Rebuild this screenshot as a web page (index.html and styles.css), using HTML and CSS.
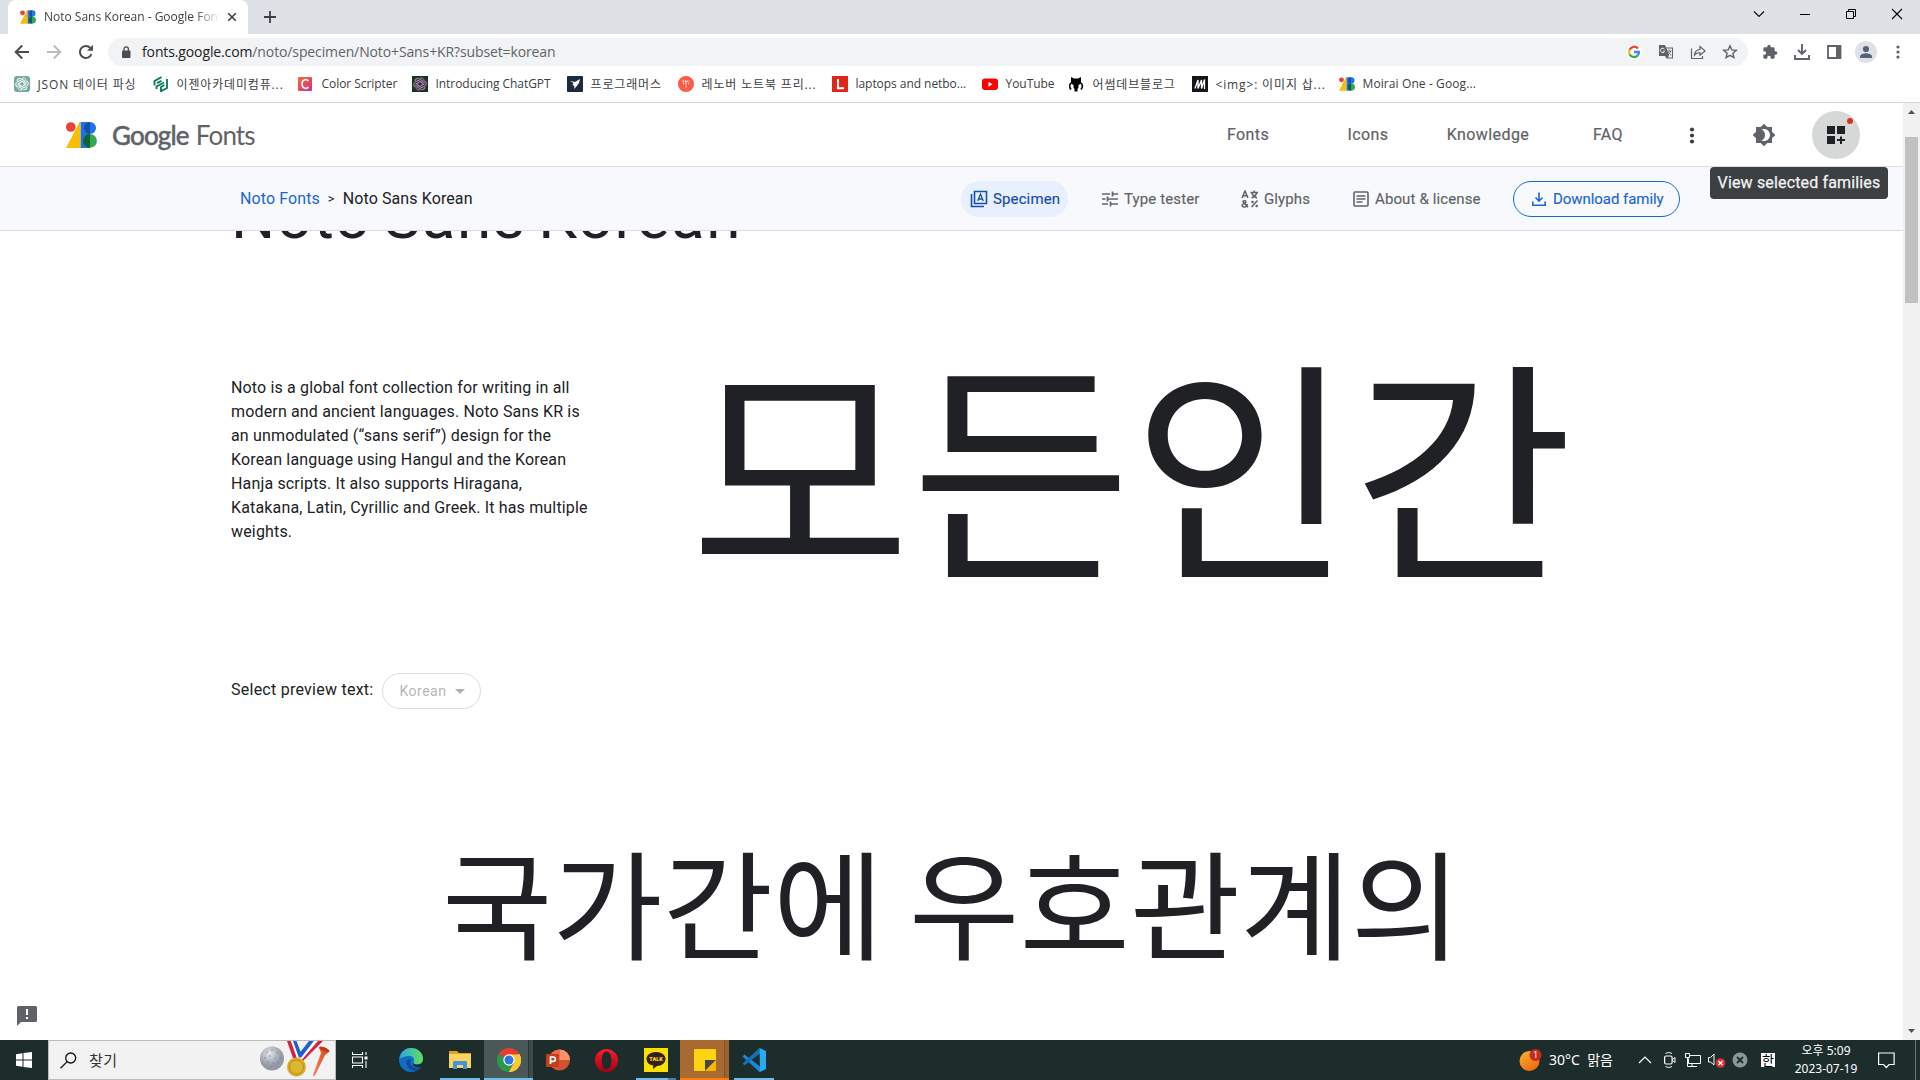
FILE: index.html
```html
<!DOCTYPE html>
<html lang="ko">
<head>
<meta charset="utf-8">
<title>Noto Sans Korean - Google Fonts</title>
<link rel="stylesheet" href="styles.css">
</head>
<body>
<svg class="defs" width="0" height="0">
  <symbol id="gf" viewBox="0 0 31 26">
    <path d="M14.700 0v26H0L13.500 0z" fill="#fbbc04"/>
    <path d="M14.700 0H24v26h-9.300z" fill="#1a73e8"/>
    <circle cx="4.800" cy="5" r="4.800" fill="#ea4335"/>
    <path d="M24 0a6 6 0 0 1 0 12z" fill="#1a73e8"/>
    <path d="M24 0a6 6 0 0 0 0 12z" fill="#174ea6"/>
    <path d="M24 12a6.900 6.900 0 0 1 0 13.800z" fill="#34a853"/>
    <path d="M24 12a6.900 6.900 0 0 0 0 13.800z" fill="#0d652d"/>
  </symbol>
  <symbol id="knot" viewBox="0 0 16 16">
    <g fill="none" stroke="currentColor" stroke-width="1">
      <path id="petal" d="M8 2.200c2-.9 4 .4 4 2.500v3.500L8 10.500"/>
      <use href="#petal" transform="rotate(60 8 8)"/>
      <use href="#petal" transform="rotate(120 8 8)"/>
      <use href="#petal" transform="rotate(180 8 8)"/>
      <use href="#petal" transform="rotate(240 8 8)"/>
      <use href="#petal" transform="rotate(300 8 8)"/>
    </g>
  </symbol>
</svg>

<div class="tabstrip">
  <div class="tab">
    <svg width="16" height="16"><use href="#gf"/></svg>
    <span class="tab-title">Noto Sans Korean - Google Fonts</span>
    <svg class="tab-close" width="10" height="10" viewBox="0 0 10 10"><path d="M1.200 1.200l7.600 7.600M8.800 1.200L1.200 8.800" stroke="#3c4043" stroke-width="1.600"/></svg>
  </div>
  <svg class="newtab" width="12" height="12" viewBox="0 0 12 12"><path d="M6 0v12M0 6h12" stroke="#3c4043" stroke-width="1.800"/></svg>
  <div class="winctl">
    <svg width="12" height="12" viewBox="0 0 12 12"><path d="M1 3.500l5 5 5-5" fill="none" stroke="#111" stroke-width="1.200"/></svg>
    <svg width="12" height="12" viewBox="0 0 12 12"><path d="M1 6.500h10" stroke="#000"/></svg>
    <svg width="12" height="12" viewBox="0 0 12 12"><path d="M1.500 3.500h7v7h-7zM3.500 3.500v-2h7v7h-2" fill="none" stroke="#000"/></svg>
    <svg width="12" height="12" viewBox="0 0 12 12"><path d="M1 1l10 10M11 1L1 11" stroke="#000" stroke-width="1.100"/></svg>
  </div>
</div>

<div class="toolbar">
  <svg width="16" height="16" viewBox="0 0 16 16"><path d="M15 8H2M8.200 1.500L1.700 8l6.500 6.500" fill="none" stroke="#4a4d51" stroke-width="2"/></svg>
  <svg width="16" height="16" viewBox="0 0 16 16"><path d="M1 8h13M7.800 1.500L14.300 8l-6.500 6.500" fill="none" stroke="#babcbe" stroke-width="2"/></svg>
  <svg width="16" height="16" viewBox="0 0 16 16"><path d="M13.500 10.200A6 6 0 1 1 12.400 4" fill="none" stroke="#4a4d51" stroke-width="2"/><path d="M15 .8v6H9z" fill="#4a4d51"/></svg>
  <div class="omnibox">
    <svg width="10" height="12" viewBox="0 0 10 12"><rect x="1" y="4.500" width="8.500" height="7.500" rx="1" fill="#4a4d51"/><path d="M3 5V3a2.200 2.200 0 0 1 4.400 0v2" fill="none" stroke="#4a4d51" stroke-width="1.300"/></svg>
    <span class="url"><b>fonts.google.com</b>/noto/specimen/Noto+Sans+KR?subset=korean</span>
    <div class="omni-icons">
      <svg width="16" height="16" viewBox="0 0 16 16"><circle cx="8" cy="8" r="8" fill="#fff"/><g fill="none" stroke-width="2.300"><path d="M12 4.500A5 5 0 0 0 3.600 5.700" stroke="#ea4335"/><path d="M3.600 5.700a5 5 0 0 0 0 4.600" stroke="#fbbc04"/><path d="M3.600 10.300a5 5 0 0 0 7.900 1.400" stroke="#34a853"/><path d="M11.500 11.700A5 5 0 0 0 13 8H8" stroke="#4285f4"/></g></svg>
      <svg width="16" height="16" viewBox="0 0 16 16"><path d="M1 1h6l1 2.500h7v11H8.500L7 12H1z" fill="#5f6368"/><path d="M8.500 4.500h5.500v9H10l1-2z" fill="#f1f3f4"/><path d="M9 7h4.500M11.200 5.500V7M12.700 7c-.5 2-1.500 3-3 4M10 8c.8 1.500 1.800 2.500 3.500 3.200" stroke="#5f6368" fill="none" stroke-width=".9"/><path d="M6.500 5.200a2.200 2.200 0 1 0 .2 2H5" stroke="#f1f3f4" fill="none"/></svg>
      <svg width="16" height="16" viewBox="0 0 16 16"><path d="M1.500 4.500v10h11V12" fill="none" stroke="#5f6368" stroke-width="1.200"/><path d="M4.500 11c.3-3.500 2.500-5.300 5.500-5.500V2.600L15.200 7 10 11.300V8.600c-2.300 0-4.200.8-5.500 2.400z" fill="none" stroke="#5f6368" stroke-width="1.200"/></svg>
      <svg width="16" height="16" viewBox="0 0 16 16"><path d="M8 1.800l1.800 4.100 4.500.4-3.400 2.900 1 4.400L8 11.300l-3.900 2.300 1-4.400-3.400-2.900 4.500-.4z" fill="none" stroke="#5f6368" stroke-width="1.400"/></svg>
    </div>
  </div>
  <div class="actions">
    <svg width="16" height="16" viewBox="0 0 24 24"><path d="M20.500 11H19V7a2 2 0 0 0-2-2h-4V3.500a2.500 2.500 0 0 0-5 0V5H4a2 2 0 0 0-2 2v3.800h1.500a2.700 2.700 0 0 1 0 5.400H2V20a2 2 0 0 0 2 2h3.800v-1.500a2.700 2.700 0 0 1 5.400 0V22H17a2 2 0 0 0 2-2v-4h1.500a2.500 2.500 0 0 0 0-5z" fill="#5f6368"/></svg>
    <svg width="16" height="16" viewBox="0 0 16 16"><path d="M8 0v9.500M4 6l4 4 4-4M1 11v4h14v-4" fill="none" stroke="#5f6368" stroke-width="1.900"/></svg>
    <svg width="16" height="16" viewBox="0 0 16 16"><path d="M2 2h12.500v12H2z" fill="none" stroke="#5f6368" stroke-width="1.800"/><path d="M10 2h5v12h-5z" fill="#5f6368"/></svg>
    <svg class="avatar" width="22" height="22" viewBox="0 0 22 22"><circle cx="11" cy="11" r="11" fill="#dee1e6"/><circle cx="11" cy="8" r="3.100" fill="#55627a"/><path d="M5 17v-1.500c0-2.300 4-3.300 6-3.300s6 1 6 3.300V17z" fill="#55627a"/></svg>
    <svg width="4" height="14" viewBox="0 0 4 14"><g fill="#5f6368"><circle cx="2" cy="2" r="1.600"/><circle cx="2" cy="7" r="1.600"/><circle cx="2" cy="12" r="1.600"/></g></svg>
  </div>
</div>

<div class="bookmarks">
  <div class="bm ko"><svg width="16" height="16" color="#fff"><rect width="16" height="16" rx="3" fill="#74aa9c"/><use href="#knot"/></svg><span>JSON 데이터 파싱</span></div>
  <div class="bm ko"><svg width="16" height="16" viewBox="0 0 16 16"><path d="M8.500 1.200L1.500 5v4.500M14 3v9L8 15.200V10.500M8.500 4.800L4 7.200M3.500 13V10.500L11 6.500M8 11l3.500-2" fill="none" stroke="#0f7b62" stroke-width="1.900"/></svg><span>이젠아카데미컴퓨...</span></div>
  <div class="bm"><svg width="16" height="16" viewBox="0 0 16 16"><defs><linearGradient id="cs" x2="1" y2="1"><stop stop-color="#f26a2e"/><stop offset="1" stop-color="#d62f8a"/></linearGradient></defs><rect y="1" width="14" height="14" rx="1" fill="url(#cs)"/><path d="M10.500 5.200C9 2.800 4 3 4 8s5 5.200 6.500 2.800" fill="none" stroke="#fff" stroke-width="1.600"/></svg><span>Color Scripter</span></div>
  <div class="bm"><svg width="16" height="16" color="#c77ad0"><rect width="16" height="16" fill="#173817"/><use href="#knot"/></svg><span>Introducing ChatGPT</span></div>
  <div class="bm ko"><svg width="16" height="16" viewBox="0 0 16 16"><rect width="16" height="16" rx="1" fill="#1d2a3d"/><path d="M3 5l5 1 5-3-1 4-3 4-2 2 .5-3-2-1 1-2z" fill="#fff"/></svg><span>프로그래머스</span></div>
  <div class="bm ko"><svg width="16" height="16" viewBox="0 0 16 16"><circle cx="8" cy="8" r="8" fill="#ff5a46"/><path d="M4.500 5.200h7M8 5v7M5 7.500h1M10 7.500h1" stroke="#fff" stroke-width="1.300" stroke-dasharray="1.400 .8"/></svg><span>레노버 노트북 프리...</span></div>
  <div class="bm"><svg width="16" height="16" viewBox="0 0 16 16"><path d="M0 0h16v16H0z" fill="#e1251b"/><path d="M6 3v9.300h6" fill="none" stroke="#fff" stroke-width="2"/></svg><span>laptops and netbo...</span></div>
  <div class="bm"><svg width="16" height="16" viewBox="0 0 16 16"><rect y="2.500" width="16" height="11.500" rx="3" fill="#f00"/><path d="M6.500 5.800v5l4-2.500z" fill="#fff"/></svg><span>YouTube</span></div>
  <div class="bm ko"><svg width="16" height="16" viewBox="0 0 16 16"><path d="M2 1l3 1.500h4L12 1v4.500c0 2-1 3-2.500 3.500v2.500L8.500 13v2.500H5.500V13l-1-1.500V9C3 8.500 2 7.500 2 5.500z" fill="#050505"/><path d="M3 6.500C0 8 0 11 2 13.500M11 6.500c3 1.500 3 4.500 1 7" fill="none" stroke="#111" stroke-width="1.700"/></svg><span>어썸데브블로그</span></div>
  <div class="bm ko"><svg width="16" height="16" viewBox="0 0 16 16"><path d="M0 0h16v16H0z" fill="#15141a"/><path d="M3 12.500L6 4v8.500L9.500 4v8.500L12.500 3.500V13" fill="none" stroke="#fff" stroke-width="1.300"/></svg><span>&lt;img&gt;: 이미지 삽...</span></div>
  <div class="bm wide"><svg width="16" height="16"><use href="#gf"/></svg><span>Moirai One - Goog...</span></div>
</div>

<div class="viewport">
  <div class="page">
    <header class="site-head">
      <svg width="31" height="26"><use href="#gf"/></svg>
      <div class="brand"><b>Google</b><span>Fonts</span></div>
      <nav class="nav">
        <a>Fonts</a><a>Icons</a><a>Knowledge</a><a>FAQ</a>
      </nav>
      <div class="head-btns">
        <span class="hb"><svg width="6" height="18" viewBox="0 0 6 18"><g fill="#3c4043"><circle cx="3" cy="3.500" r="2.100"/><circle cx="3" cy="9.500" r="2.100"/><circle cx="3" cy="15.500" r="2.100"/></g></svg></span>
        <span class="hb"><svg width="24" height="24" viewBox="0 0 24 24"><path d="M20 8.690V4h-4.690L12 .690 8.690 4H4v4.690L.690 12 4 15.310V20h4.690L12 23.310 15.310 20H20v-4.690L23.310 12 20 8.690zM12 18c-.89 0-1.740-.2-2.500-.550C12.060 16.290 13 14.250 13 12s-.94-4.290-3.500-5.450C10.260 6.200 11.110 6 12 6c3.310 0 6 2.690 6 6s-2.690 6-6 6z" fill="#5f6368"/></svg></span>
        <span class="hb active"><svg width="18" height="18" viewBox="0 0 18 18"><path d="M0 0h8v8H0zM10 0h8v8h-8zM0 10h8v8H0zM13 10.500h2V13h3v2h-3v3h-2v-3h-3v-2h3z" fill="#202124"/></svg><i class="dot"></i><span class="tooltip">View selected families</span></span>
      </div>
    </header>
    <div class="sub-head">
      <div class="crumbs"><a>Noto Fonts</a><i>&gt;</i><span>Noto Sans Korean</span></div>
      <div class="tabs">
        <div class="t on"><svg width="18" height="18" viewBox="0 0 18 18"><path d="M4.500 1.500h12v12h-12zM1.500 4v12.500H14" fill="none" stroke="#174ea6" stroke-width="1.600"/><path d="M7.700 11l2.800-7 2.800 7M8.700 9h3.600" fill="none" stroke="#174ea6" stroke-width="1.300"/></svg><span>Specimen</span></div>
        <div class="t"><svg width="18" height="18" viewBox="0 0 18 18"><path d="M1 4h8M11.500 4H17M11.500 1.500v5M1 9h3.500M7 9h10M6.500 6.500v5M1 14h6M9.500 14H17M9.500 11.500v5" stroke="#5f6368" stroke-width="1.700"/></svg><span>Type tester</span></div>
        <div class="t"><svg width="18" height="18" viewBox="0 0 18 18"><g fill="none" stroke="#5f6368" stroke-width="1.500"><path d="M1 8l3-7 3 7M2 5.800h4M9.500 2.500H17M13.200.5v2M15.700 3c-.6 2-2.500 4-5.200 5M10.800 3c.7 2 2.500 4 5.200 5M7 17.300L2.200 12c-1-1.500 2.800-2 2.800 0 0 1.500-4 1.500-4 3.500 0 2 4.500 2.500 5.500-1.500M10.500 17l6-6.500"/></g><circle cx="11.500" cy="12" r="1.300" fill="#5f6368"/><circle cx="15.700" cy="16" r="1.300" fill="#5f6368"/></svg><span>Glyphs</span></div>
        <div class="t"><svg width="18" height="18" viewBox="0 0 18 18"><rect x="2" y="2" width="14" height="14" rx="1" fill="none" stroke="#5f6368" stroke-width="1.600"/><path d="M4.500 6h9M4.500 9h9M4.500 12h6" stroke="#5f6368" stroke-width="1.500"/></svg><span>About &amp; license</span></div>
        <div class="t dl"><svg width="18" height="18" viewBox="0 0 18 18"><path d="M9 2.500v8M5.500 7.500L9 11l3.500-3.500M2.800 11.500v3.700h12.400v-3.700" fill="none" stroke="#1967d2" stroke-width="1.600"/></svg><span>Download family</span></div>
      </div>
    </div>
    <main class="content">
      <h1>Noto Sans Korean</h1>
      <section class="hero">
        <p>Noto is a global font collection for writing in all<br>modern and ancient languages. Noto Sans KR is<br>an unmodulated (“sans serif”) design for the<br>Korean language using Hangul and the Korean<br>Hanja scripts. It also supports Hiragana,<br>Katakana, Latin, Cyrillic and Greek. It has multiple<br>weights.</p>
        <div class="big">모든인간</div>
      </section>
      <div class="preview"><span>Select preview text:</span><div class="select">Korean<i></i></div></div>
      <div class="sample">국가간에 우호관계의</div>
      <svg class="feedback" width="20" height="20" viewBox="0 0 20 20"><path d="M1.500 0h17A1.500 1.500 0 0 1 20 1.500v13a1.500 1.500 0 0 1-1.500 1.500H4l-4 4V1.500A1.500 1.500 0 0 1 1.500 0z" fill="#5f6368"/><path d="M9 3h2v6H9zM9 11h2v2H9z" fill="#fff"/></svg>
    </main>
  </div>
  <div class="scroll">
    <svg width="17" height="17" viewBox="0 0 17 17"><path d="M5 11l3.500-4 3.500 4z" fill="#505050"/></svg>
    <div class="thumb"></div>
    <svg class="down" width="17" height="17" viewBox="0 0 17 17"><path d="M5 6l3.500 4L12 6z" fill="#505050"/></svg>
  </div>
</div>

<div class="taskbar">
  <div class="start"><svg width="16" height="16" viewBox="0 0 16 16"><path d="M0 2.200L6.500 1.300v6.200H0zM7.500 1.100L16 0v7.500H7.500zM0 8.500h6.500v6.200L0 13.800zM7.500 8.500H16V16l-8.500-1.100z" fill="#fff"/></svg></div>
  <div class="search">
    <svg width="17" height="17" viewBox="0 0 17 17"><circle cx="10.700" cy="6" r="5" fill="none" stroke="#111" stroke-width="1.300"/><path d="M7.200 9.600L.5 16.300" stroke="#111" stroke-width="1.300"/></svg>
    <span>찾기</span>
    <svg class="deco" width="72" height="38" viewBox="0 0 72 38">
      <defs><radialGradient id="ball" cx=".4" cy=".3"><stop stop-color="#e6e8ec"/><stop offset="1" stop-color="#9298a4"/></radialGradient><linearGradient id="tee" x2="1"><stop stop-color="#f58a5a"/><stop offset="1" stop-color="#d63c12"/></linearGradient></defs>
      <circle cx="13" cy="17.500" r="12" fill="url(#ball)"/>
      <g fill="#7d8492"><circle cx="8" cy="11" r=".8"/><circle cx="13" cy="9" r=".8"/><circle cx="18" cy="12" r=".8"/><circle cx="6" cy="17" r=".8"/><circle cx="11" cy="15" r=".8"/><circle cx="16" cy="17" r=".8"/><circle cx="21" cy="17" r=".8"/><circle cx="9" cy="21" r=".8"/><circle cx="14" cy="22" r=".8"/><circle cx="19" cy="22" r=".8"/><circle cx="12" cy="26" r=".8"/></g>
      <path d="M28 0h4l6 17h-4z" fill="#d6213c"/><path d="M32 0h2l6 16-2 1z" fill="#fff"/><path d="M34 0h3.500l5 13-2.500 4z" fill="#1f5fd0"/>
      <path d="M50 0h5L42 17l-3-3z" fill="#1f5fd0"/><path d="M55 0h4L43 19l-1-2z" fill="#fff"/><path d="M59 0h5L44 20l-1-1.500z" fill="#d6213c"/>
      <circle cx="37.500" cy="26" r="9.500" fill="#d9ab26"/><circle cx="37.500" cy="26" r="7" fill="#dbb734" stroke="#b98c19"/>
      <path d="M60 6.500c3-1.500 9 .5 10.500 4l-4.500 3.500L56 34.500l-2 1 .5-3L62 12z" fill="url(#tee)"/><ellipse cx="65.200" cy="8.200" rx="5.300" ry="1.800" transform="rotate(22 65.200 8.200)" fill="#c23a12"/>
    </svg>
  </div>
  <div class="apps">
    <div class="app tv"><svg width="17" height="16" viewBox="0 0 17 16"><path d="M.5 0v2.500h10V0M.5 5h10v6H.5zM.5 16v-2.500h10V16M14 0v3M14 9v7" fill="none" stroke="#fff" stroke-width="1.100"/><path d="M12.500 4.500h3v3h-3z" fill="#fff"/></svg></div>
    <div class="app"><svg width="24" height="24" viewBox="0 0 24 24"><defs><linearGradient id="e1" x2="1"><stop stop-color="#2aa5e8"/><stop offset="1" stop-color="#5fe05a"/></linearGradient></defs><circle cx="12" cy="12" r="12" fill="#0f6ec4"/><path d="M.5 10C2 3 7 0 12 0c7 0 12 5 12 10.500 0 4-3 6-6 6-3 0-4.500-1-3.500-2.500 1.500-2.500 0-6-4-6-5 0-9 3-10 2z" fill="url(#e1)"/><path d="M7.500 14c0 5 4 9 9 9 3 0 5-2 6-4-2 1-4 1.500-7 .5-4-1.500-5-4.500-3.500-8-3-1-4.500 1-4.500 2.500z" fill="#134a96"/><path d="M14.500 14c-.8 1.600.8 2.500 4 2.500 2.800 0 5-1.300 5.700-3.500.2 2.500-.2 4-1 5.500-2 1-4 1.200-6 .5-3-1-4-3-2.700-5z" fill="#1c2d2b"/></svg></div>
    <div class="app run"><svg width="22" height="18" viewBox="0 0 22 18"><path d="M0 0h8l2 2H22v15H0z" fill="#e6a21b"/><path d="M0 3h22v14H0z" fill="#fcd462"/><path d="M4 18v-6.500A1.500 1.500 0 0 1 5.500 10h11a1.500 1.500 0 0 1 1.500 1.500V18h-4v-4H8v4z" fill="#3f96dd"/></svg></div>
    <div class="app chrome"><svg width="24" height="24" viewBox="0 0 24 24"><path d="M12 12L1.600 6A12 12 0 0 1 22.400 6z" fill="#e43e2f"/><path d="M12 12h0L22.400 6A12 12 0 0 1 12 24z" fill="#fcc934"/><path d="M12 12v0l5.200 3L12 24A12 12 0 0 1 1.600 6z" fill="#2b9a48"/><path d="M12 6.500h10.600A12 12 0 0 1 12 24l5-9z" fill="#fcc934"/><circle cx="12" cy="12" r="5.700" fill="#fff"/><circle cx="12" cy="12" r="4.500" fill="#2b78e4"/></svg></div>
    <div class="app"><svg width="24" height="22" viewBox="0 0 24 22"><circle cx="13.500" cy="11" r="10.500" fill="#d35230"/><path d="M13.500.5A10.500 10.500 0 0 1 24 11H13.500z" fill="#ff8f6b"/><path d="M13.500.5A10.500 10.500 0 0 0 3 11h10.500z" fill="#ed6c47"/><rect y="5" width="13" height="13" rx="1" fill="#c43e1c"/><path d="M4.500 15V8h2.700a2.100 2.100 0 0 1 0 4.300H4.500" fill="none" stroke="#fff" stroke-width="1.700"/></svg></div>
    <div class="app"><svg width="23" height="23" viewBox="0 0 23 23"><defs><linearGradient id="op" y2="1" x2="0"><stop stop-color="#ff1b2d"/><stop offset="1" stop-color="#a70014"/></linearGradient></defs><path fill-rule="evenodd" d="M11.500 0a11.500 11.500 0 1 0 0 23 11.500 11.500 0 0 0 0-23zm0 2.500c3 0 5 4 5 9s-2 9-5 9-4.800-4-4.800-9 1.800-9 4.800-9z" fill="url(#op)"/></svg></div>
    <div class="app kakao"><svg width="24" height="24" viewBox="0 0 24 24"><path d="M0 0h24v24H0z" fill="#fbe000"/><path d="M12 4c5.500 0 9.500 3 9.500 7s-4 7-8.500 7l-4 3 .3-3.500C5.500 17 2.500 14.500 2.500 11c0-4 4-7 9.500-7z" fill="#371d1e"/><text x="12" y="13" text-anchor="middle" font-family="Roboto, sans-serif" font-weight="900" font-size="5.500" fill="#fbe000">TALK</text></svg></div>
    <div class="app sticky"><svg width="22" height="22" viewBox="0 0 22 22"><path d="M1 0h20a1 1 0 0 1 1 1v10L11 22H1a1 1 0 0 1-1-1V1a1 1 0 0 1 1-1z" fill="#fdd314"/><path d="M11 11h11L11 22z" fill="#474747"/><path d="M22 11v10a1 1 0 0 1-1 1H11z" fill="#f6b900"/></svg></div>
    <div class="app run"><svg width="24" height="24" viewBox="0 0 24 24"><path d="M17.500 0L24 3v18l-6.500 3L.5 8.500 2.500 6.500 18 18.500V0z" fill="#1b8ad6"/><path d="M17.500 0L.5 15.500l2 2L18 5.500z" fill="#1272b8"/><path d="M17.500 0L24 3v18l-6.500 3 .5-1z" fill="#2aa9f2"/></svg></div>
  </div>
  <div class="tray">
    <div class="weather"><svg width="23" height="23" viewBox="0 0 23 23"><defs><linearGradient id="sun" x2=".6" y2="1"><stop stop-color="#f9b52a"/><stop offset="1" stop-color="#f06a10"/></linearGradient></defs><circle cx="10.500" cy="12" r="10" fill="url(#sun)"/><circle cx="16.500" cy="6" r="6" fill="#c42b1c"/><text x="16.500" y="9.200" text-anchor="middle" font-family="Open Sans, sans-serif" font-size="9" fill="#fff">1</text></svg><span>30°C&nbsp; 맑음</span></div>
    <svg class="g11" width="14" height="8" viewBox="0 0 14 8"><path d="M1 7l6-6 6 6" fill="none" stroke="#fff" stroke-width="1.200"/></svg>
    <svg width="12" height="16" viewBox="0 0 12 16"><rect x=".6" y="4" width="7.500" height="8" rx="1.500" fill="none" stroke="#fff" stroke-width="1.200"/><path d="M8.500 7.500l2.500-2v5l-2.500-2M1.500 1.500C3.500.3 6 .3 8 1.500M1.500 14.500c2 1.200 4.500 1.200 6.500 0" fill="none" stroke="#fff"/></svg>
    <svg class="g8" width="16" height="15" viewBox="0 0 16 15"><path d="M5 2.500h10.500v8H3.500v-5M.5.500h4v4h-4zM2.500 4.500v9H7M7 10.500v3h5" fill="none" stroke="#fff"/></svg>
    <svg class="g7" width="18" height="15" viewBox="0 0 18 15"><path d="M.5 4.500h2L6 1v11L2.500 9h-2z" fill="none" stroke="#fff"/><circle cx="12.500" cy="10" r="4.800" fill="#d9303a"/><path d="M10.500 8l4 4M14.500 8l-4 4" stroke="#fff" stroke-width="1.200"/></svg>
    <svg width="16" height="16" viewBox="0 0 16 16"><circle cx="8" cy="8" r="7.500" fill="#8f9896"/><path d="M5 5l6 6M11 5l-6 6" stroke="#1c2d2b" stroke-width="1.800"/></svg>
    <span class="ime">한</span>
    <div class="clock"><span>오후 5:09</span><span>2023-07-19</span></div>
    <svg width="17" height="17" viewBox="0 0 17 17"><path d="M.6 1h15.500v11.500h-5L8.300 15.500l-2.800-3H.6z" fill="none" stroke="#fff" stroke-width="1.200"/></svg>
    <i class="peek"></i>
  </div>
</div>
</body>
</html>
```
FILE: styles.css
```css
* { box-sizing: border-box; }
svg { display: block; flex: none; }
i { font-style: normal; }
b { font-weight: inherit; }
body {
  margin: 0; width: 1920px; height: 1080px; overflow: hidden;
  display: flex; flex-direction: column; background: #fff;
  font-family: Roboto, "Noto Sans CJK KR", sans-serif; color: #202124;
}
.defs { position: absolute; }

/* browser chrome */
.tabstrip, .toolbar, .bookmarks { font-family: "Open Sans", "Noto Sans CJK KR", sans-serif; }
.tabstrip { height: 34px; background: #dee1e6; display: flex; align-items: center; padding-left: 8px; flex: none; }
.tab { width: 240px; height: 34px; background: #fff; border-radius: 8px 8px 0 0; display: flex; align-items: center; padding: 0 11px 0 12px; }
.tab-title { width: 176px; margin: -1px 0 0 8px; overflow: hidden; white-space: nowrap; font-size: 12px; color: #3c4043; mask-image: linear-gradient(90deg, #000 150px, transparent 176px); }
.tab-close { margin-left: 7px; }
.newtab { margin-left: 16px; }
.winctl { margin-left: auto; display: flex; gap: 34px; padding-right: 17px; margin-top: -6px; }
.toolbar { height: 36px; flex: none; display: flex; align-items: center; gap: 16px; padding: 0 20px 0 14px; }
.omnibox { flex: 1; height: 28px; margin-left: -2px; border-radius: 14px; background: #f1f3f4; display: flex; align-items: center; padding: 0 10px 0 13px; }
.url { margin: -2px 0 0 11px; font-size: 14px; color: #5f6368; letter-spacing: -0.12px; }
.url b { color: #202124; }
.omni-icons { margin-left: auto; display: flex; gap: 16px; }
.actions { display: flex; align-items: center; gap: 16px; margin-left: -2px; }
.avatar { margin: 0 3px 0 -3px; }
.bookmarks {
  height: 33px; flex: none; padding: 0 0 4px 14px; border-bottom: 1px solid #d5d7da;
  display: grid; align-items: center; font-size: 12px; color: #3c4043;
  grid-template-columns: 139px 145px 114px 155px 111px 154px 150px 87px 123px 147px 141px;
}
.bm { display: flex; align-items: center; gap: 7.500px; white-space: nowrap; letter-spacing: -0.05px; }
.bm span { margin-top: -1px; }
.ko { letter-spacing: 0.85px; }
.wide { letter-spacing: 0.1px; }

/* page */
.viewport { flex: 1; display: flex; min-height: 0; }
.page { flex: 1; display: flex; flex-direction: column; min-width: 0; }
.site-head { height: 64px; flex: none; display: flex; align-items: center; border-bottom: 1px solid #dadce0; padding: 0 43px 0 66px; }
.brand { margin-left: 15px; font: 26px Lato, sans-serif; color: #5f6368; display: flex; gap: 7px; letter-spacing: -0.85px; }
.brand b { font-weight: 500; -webkit-text-stroke: .4px; }
.nav { margin-left: auto; display: grid; grid-template-columns: repeat(4, 120px); text-align: center; font-size: 16px; letter-spacing: .4px; -webkit-text-stroke: .2px; color: #5f6368; }
.head-btns { display: flex; gap: 24px; }
.hb { width: 48px; height: 48px; display: grid; place-items: center; border-radius: 50%; position: relative; }
.active { background: #d6d8d7; }
.dot { position: absolute; width: 6px; height: 6px; right: 7px; top: 7px; border-radius: 50%; background: #d93025; }
.tooltip { position: absolute; z-index: 3; top: 56px; right: -28px; width: 178px; height: 32px; border-radius: 4px; background: #3c4043; color: #f1f3f4; font-size: 16px; letter-spacing: .15px; -webkit-text-stroke: .25px; line-height: 31px; text-align: center; white-space: nowrap; }
.sub-head { height: 64px; flex: none; background: #f8f9fc; border-bottom: 1px solid #dadce0; display: flex; align-items: center; justify-content: space-between; padding: 0 223px 0 240px; }
.crumbs { display: flex; align-items: center; font-size: 16px; gap: 8px; letter-spacing: .1px; }
.crumbs a { color: #1967d2; }
.crumbs i { font-size: 13px; }
.tabs { display: grid; grid-template-columns: 107px 116px 87px 146px 167px; gap: 24px; }
.t { height: 36px; border-radius: 18px; display: flex; align-items: center; gap: 5px; padding-left: 9px; font-size: 15px; letter-spacing: .12px; -webkit-text-stroke: .15px; color: #5f6368; white-space: nowrap; }
.on { background: #e8f0fe; color: #174ea6; }
.dl { border: 1px solid #1967d2; color: #1967d2; padding-left: 16px; letter-spacing: -0.05px; }
.content { flex: 1; min-height: 0; overflow: hidden; position: relative; }
h1 { margin: -46px 0 0 231px; font-size: 62px; line-height: 64px; font-weight: 400; letter-spacing: 1.5px; word-spacing: -5px; white-space: nowrap; }
.hero { display: grid; grid-template-columns: 459px 1fr; margin: 93px 0 0 231px; height: 240px; }
.hero p { margin: 34px 0 0; font-size: 16px; line-height: 24px; letter-spacing: .16px; white-space: nowrap; }
.big { font: 240px/240px "Noto Sans CJK KR", sans-serif; white-space: nowrap; transform: scaleY(.985); transform-origin: 0 24px; }
.preview { margin: 91px 0 0 231px; height: 36px; display: flex; align-items: center; gap: 9px; font-size: 16px; letter-spacing: .25px; }
.preview span { margin-top: -3px; }
.select { width: 99px; height: 36px; border: 1px solid #dadce0; border-radius: 18px; display: flex; align-items: center; padding-left: 16px; gap: 9px; font-size: 14px; letter-spacing: .5px; color: #b4b6b9; }
.select i { border: 5px solid transparent; border-top-color: #b0b0b0; border-bottom: 0; }
.sample { margin-top: 131px; text-align: center; font: 120px/120px "Noto Sans CJK KR", sans-serif; word-spacing: -8px; white-space: nowrap; transform: scaleY(.988); transform-origin: 0 12px; }
.feedback { margin: 46px 0 0 17px; }
.scroll { width: 17px; background: #f1f1f1; display: flex; flex-direction: column; }
.thumb { width: 13px; height: 166px; background: #c1c1c1; margin: 17px 0 0 2px; }
.down { margin-top: auto; }

/* windows taskbar */
.taskbar { height: 40px; flex: none; background: #1c2d2b; display: flex; color: #fff; font-family: "Noto Sans", "Noto Sans CJK KR", sans-serif; }
.start { width: 48px; display: grid; place-items: center; }
.search { width: 288px; background: #f2f2f2; border: 1px solid #bbb; display: flex; align-items: center; padding-left: 11px; color: #333; font-size: 15px; }
.search span { margin: -2px 0 0 12px; letter-spacing: .5px; }
.deco { margin-left: auto; margin-right: 4px; }
.apps { display: grid; grid-template-columns: 50px repeat(8, 49px); }
.app { display: grid; place-items: center; }
.tv { padding-right: 1px; }
.run { background: linear-gradient(#76b9ed, #76b9ed) 50% 100% / 40px 2px no-repeat; }
.chrome { background: linear-gradient(#76b9ed, #76b9ed) 0 100% / 100% 2px no-repeat, linear-gradient(90deg, #4a5957 44px, #253634 44px, #253634 45px, #3d4c4a 45px); }
.kakao { background: linear-gradient(90deg, #76b9ed 32px, #55799b 32px) 50% 100% / 40px 2px no-repeat; }
.sticky { background: linear-gradient(#ff7b0a, #ff7b0a) 0 100% / 100% 2px no-repeat, linear-gradient(90deg, #a96a32 44px, #7c5530 44px, #7c5530 45px, #9c632f 45px); }
.tray { margin-left: auto; display: flex; align-items: center; font-size: 13px; }
.tray > svg { margin-right: 9px; }
.tray > .g11 { margin-right: 12px; }
.tray > .g8 { margin-right: 7px; }
.tray > .g7 { margin-right: 6px; }
.weather { display: flex; align-items: center; gap: 7px; font-size: 14px; margin-right: 25px; white-space: nowrap; }
.weather span { margin-top: -2px; }
.ime { width: 14px; height: 14px; margin: 0 17px 0 4px; background: #fff; color: #000; font-size: 13px; line-height: 14px; text-align: center; }
.clock { width: 68px; margin-right: 18px; display: flex; flex-direction: column; align-items: center; font-size: 12px; line-height: 18px; white-space: nowrap; }
.peek { width: 1px; height: 40px; background: #6b7775; margin: 0 4px 0 11px; }
```
